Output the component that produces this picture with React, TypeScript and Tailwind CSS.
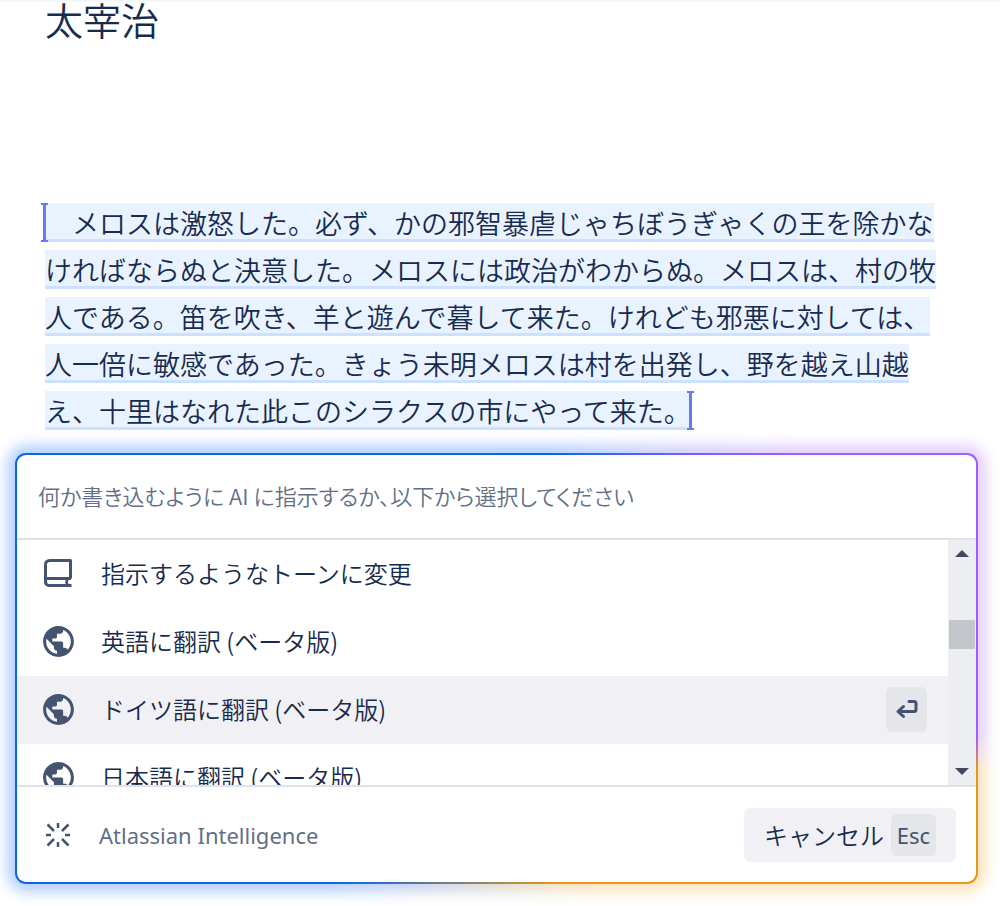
import { useState } from "react";
import { MdPublic } from "react-icons/md";

const PASSAGE =
  "\u3000メロスは激怒した。必ず、かの邪智暴虐じゃちぼうぎゃくの王を除かなければならぬと決意した。メロスには政治がわからぬ。メロスは、村の牧人である。笛を吹き、羊と遊んで暮して来た。けれども邪悪に対しては、人一倍に敏感であった。きょう未明メロスは村を出発し、野を越え山越え、十里はなれた此このシラクスの市にやって来た。";

const OPTIONS = [
  { id: "tone", label: "指示するようなトーンに変更", icon: "book" },
  { id: "en", label: "英語に翻訳 (ベータ版)", icon: "globe" },
  { id: "de", label: "ドイツ語に翻訳 (ベータ版)", icon: "globe" },
  { id: "ja", label: "日本語に翻訳 (ベータ版)", icon: "globe" },
];

function RangeMarker() {
  return (
    <span className="relative">
      <svg
        className="absolute -left-1 top-0 h-[39px] w-[7px]"
        viewBox="0 0 7 39"
        aria-hidden="true"
      >
        <path d="M0 0h7v2H5v35h2v2H0v-2h2V2H0z" fill="#6978f5" />
      </svg>
    </span>
  );
}

function BookIcon() {
  return (
    <svg
      width="28"
      height="28"
      viewBox="0 0 28 28"
      fill="none"
      stroke="#44546f"
      strokeWidth="3"
      aria-hidden="true"
    >
      <path d="M27.5 26.500H5A3.500 3.500 0 0 1 1.500 23V5.500a4 4 0 0 1 4-4h21V19.500" strokeLinejoin="round" />
      <path d="M2 19.500h25" />
      <path d="M23.500 20.500q-2 2.500 0 5" strokeWidth="2.500" />
    </svg>
  );
}

function ReturnIcon() {
  return (
    <svg
      width="22"
      height="20"
      viewBox="0 0 22 20"
      fill="none"
      stroke="#44546f"
      strokeWidth="3"
      strokeLinecap="round"
      strokeLinejoin="round"
      aria-hidden="true"
    >
      <path d="M13 2.500h5a2 2 0 0 1 2 2V10.500a2 2 0 0 1-2 2H2.500" />
      <path d="M7.500 7.500l-5.500 5 5.500 5" />
    </svg>
  );
}

function SparkIcon() {
  return (
    <svg width="26" height="26" viewBox="0 0 26 26" stroke="#44546f" strokeWidth="2.500" aria-hidden="true">
      <path d="M13 1v5M13 20v5M1 13h5M20 13h5M2.500 2.500l6.500 6.500M17 17l6.500 6.500M23.500 2.500L17 9M9 17l-6.500 6.500" />
    </svg>
  );
}

export default function App() {
  const [prompt, setPrompt] = useState("");
  const [active, setActive] = useState("de");

  return (
    <main className="overflow-hidden border-t-2 border-[#f4f7f8] bg-white pb-[22px] font-['Noto_Sans_CJK_JP',sans-serif] text-[#172b4d]">
      <article className="px-[45px]">
        <h1 className="text-[38px] font-[350] leading-[34px]">太宰治</h1>
        <p className="mt-[163px] text-[27px] font-[350] leading-[47px]">
          <RangeMarker />
          <span className="bg-[#e9f2ff] box-decoration-clone shadow-[inset_0_-3px_0_#cce0ff]">
            {PASSAGE}
          </span>
          <RangeMarker />
        </p>
      </article>

      <section className="ml-[15px] mr-[22px] mt-[19px]">
        <div className="relative">
          <div className="absolute -inset-2 rounded-[20px] bg-[conic-gradient(#0065ff_14deg,#9f5eff_54deg_98deg,#f5a623_102deg_155deg,#0065ff_218deg)] opacity-30 blur-[7px]" />
          <div className="relative rounded-[11px] bg-[conic-gradient(#0065ff_14deg,#9f5eff_54deg_98deg,#e8971e_102deg_164deg,#0c66e4_218deg)] p-0.5">
            <div className="overflow-hidden rounded-[9px] bg-white">
              <input
                aria-label="AI への指示"
                className="block h-[83px] w-full px-[21px] pb-1 text-[22px] font-[350] outline-none [font-feature-settings:'palt'] placeholder:text-[#626f86] placeholder:opacity-100"
                placeholder="何か書き込むように AI に指示するか、以下から選択してください"
                value={prompt}
                onChange={(e) => setPrompt(e.target.value)}
              />
              <div className="flex h-[249px] border-y-2 border-[#dfe2e8]">
                <ul className="flex-1 overflow-hidden">
                  {OPTIONS.map(({ id, label, icon }) => (
                    <li key={id}>
                      <button
                        type="button"
                        onClick={() => setActive(id)}
                        className={`flex h-[68px] w-full items-center pb-0.5 pl-[25px] pr-[21px] text-left text-2xl font-[350] ${
                          active === id ? "bg-[#f1f1f5]" : ""
                        }`}
                      >
                        <span className="flex w-8 justify-center">
                          {icon === "book" ? (
                            <BookIcon />
                          ) : (
                            <MdPublic size={37} color="#44546f" className="shrink-0" />
                          )}
                        </span>
                        <span className="ml-[27px] flex-1">{label}</span>
                        {active === id && (
                          <kbd className="flex h-[45px] w-[41px] items-center justify-center rounded-md bg-[#e4e6ea]">
                            <ReturnIcon />
                          </kbd>
                        )}
                      </button>
                    </li>
                  ))}
                </ul>
                <div
                  className="flex w-7 flex-col items-center justify-between bg-[#edeef2] py-2.5"
                  aria-hidden="true"
                >
                  <svg width="14" height="7" viewBox="0 0 14 7" fill="#44475f">
                    <path d="M7 0l7 7H0z" />
                  </svg>
                  <div className="mb-[57px] h-[29px] w-[26px] bg-[#c3c6ca]" />
                  <svg width="14" height="7" viewBox="0 0 14 7" fill="#44475f">
                    <path d="M0 0h14L7 7z" />
                  </svg>
                </div>
              </div>
              <footer className="flex h-[95px] items-center justify-between pl-7 pr-5">
                <div className="flex items-center gap-7">
                  <SparkIcon />
                  <span className="pt-0.5 font-['Noto_Sans',sans-serif] text-[22px] text-[#626f86]">
                    Atlassian Intelligence
                  </span>
                </div>
                <button
                  type="button"
                  className="flex h-[54px] items-center gap-[7px] rounded-md bg-[#f1f1f5] px-5 text-2xl font-[350]"
                >
                  キャンセル
                  <kbd className="flex h-[42px] w-[45px] items-center justify-center rounded-md bg-[#e4e6ea] pt-0.5 font-['Noto_Sans',sans-serif] text-[22px] font-normal text-[#44546f]">
                    Esc
                  </kbd>
                </button>
              </footer>
            </div>
          </div>
        </div>
      </section>
    </main>
  );
}
